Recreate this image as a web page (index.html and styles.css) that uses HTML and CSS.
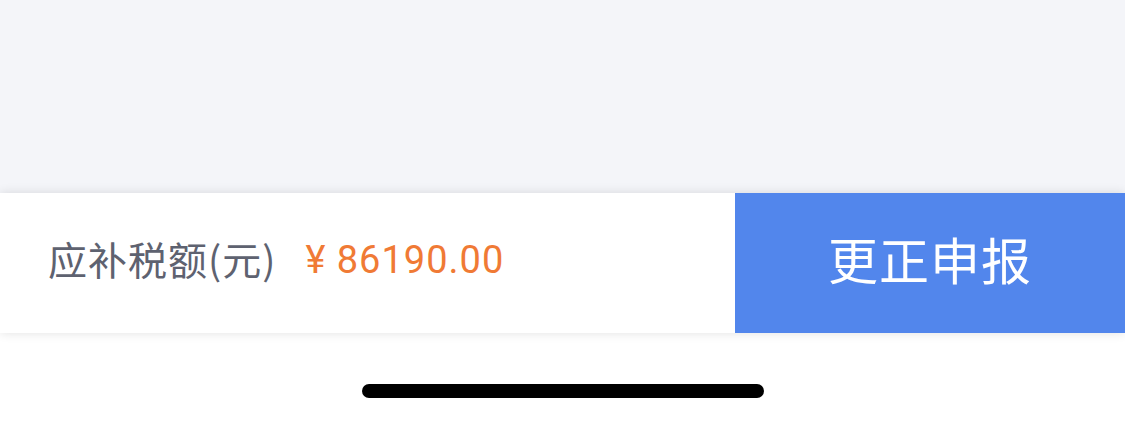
FILE: index.html
```html
<!DOCTYPE html>
<html lang="zh-CN">
<head>
    <meta charset="UTF-8">
    <meta name="viewport" content="width=device-width, initial-scale=1.0">
    <title>更正申报</title>
    <link rel="stylesheet" href="styles.css">
</head>
<body>
    <div id="page">
        <div id="content"></div>
        <div id="pay-bar">
            <div id="pay-info">
                <span id="pay-label">应补税额(元)</span>
                <span id="pay-amount">¥ 86190.00</span>
            </div>
            <button id="pay-button">更正申报</button>
        </div>
        <div id="home-area">
            <div id="home-indicator"></div>
        </div>
    </div>
</body>
</html>
```

FILE: styles.css
```css
body
{
    margin: 0;
    font-family: "Noto Sans CJK SC", "Noto Sans", sans-serif;
}

#page
{
    display: flex;
    flex-direction: column;
    height: 423px;
    overflow: hidden;
}

#content
{
    height: 193px;
    background: #f4f5f9;
}

#pay-bar
{
    display: flex;
    height: 140px;
    background: #ffffff;
    box-shadow: 0 0 10px rgba(0, 0, 0, 0.12);
    position: relative;
}

#pay-info
{
    flex: 1;
    display: flex;
    align-items: center;
    padding-left: 48px;
    padding-bottom: 10px;
    gap: 29px;
}

#pay-label
{
    font-size: 39px;
    letter-spacing: 1px;
    color: #5e6270;
}

#pay-amount
{
    font-family: Roboto, "Noto Sans", sans-serif;
    font-size: 38px;
    letter-spacing: 1px;
    color: #f07a35;
    padding-top: 4px;
}

#pay-button
{
    width: 390px;
    border: none;
    background: #5286ec;
    color: #ffffff;
    font-family: inherit;
    font-size: 50px;
    letter-spacing: 1px;
    padding: 0 0 10px 0;
}

#home-area
{
    flex: 1;
    display: flex;
    justify-content: center;
    padding-top: 51px;
    background: #ffffff;
}

#home-indicator
{
    width: 402px;
    height: 14px;
    border-radius: 7px;
    background: #000000;
}
```
